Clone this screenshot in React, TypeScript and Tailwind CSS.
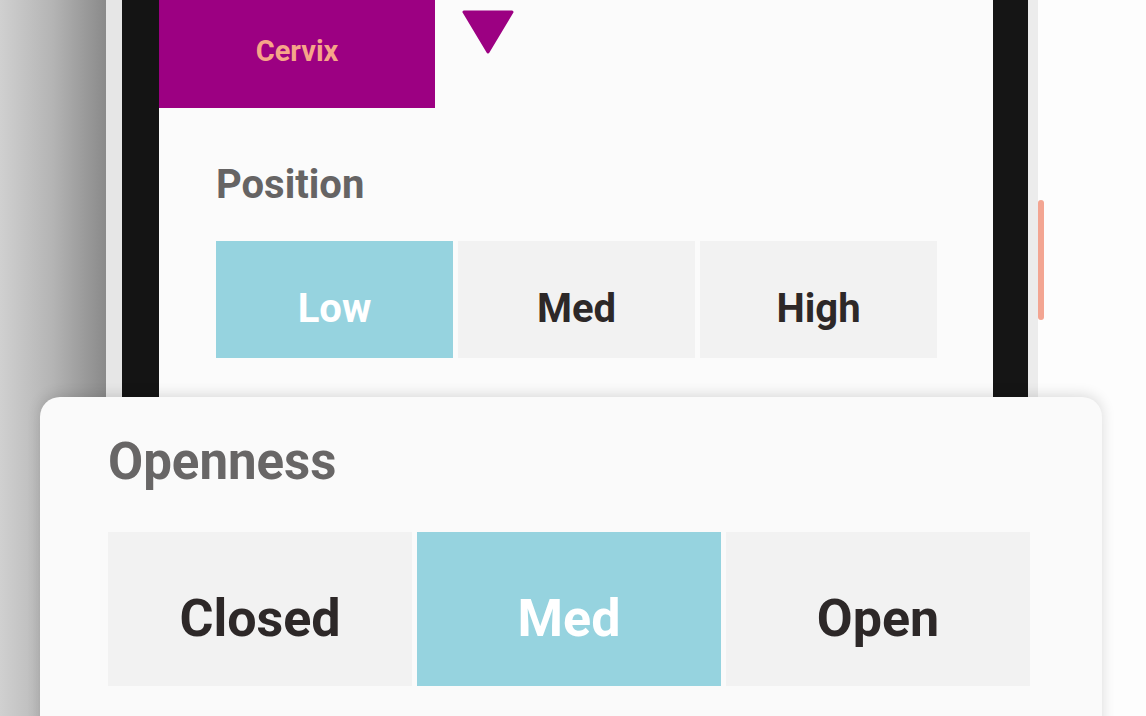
import React from "react";

const font = { fontFamily: "Roboto, 'Noto Sans', Arial, sans-serif" };

function Segmented({
  items,
  selected,
  className,
  textClass,
}: {
  items: string[];
  selected: number;
  className: string;
  textClass: string;
}) {
  return (
    <div className={`grid grid-cols-3 gap-[5px] ${className}`}>
      {items.map((label, i) => (
        <div
          key={label}
          className={`flex items-center justify-center font-bold leading-none ${textClass} ${
            i === selected ? "bg-[#96d3df] text-white" : "bg-[#f2f2f2] text-[#2d2828]"
          }`}
        >
          {label}
        </div>
      ))}
    </div>
  );
}

export default function App() {
  return (
    <div className="relative flex w-[1146px] h-[716px] overflow-hidden bg-[#fdfdfd]" style={font}>
      {/* background on the left */}
      <div className="w-[106px] h-full bg-gradient-to-r from-[#d0d0d0] via-[#b4b4b4] to-[#8a8a8a]" />

      {/* phone */}
      <div className="flex h-[397px]">
        <div className="w-[16px] bg-[#e6e6e6]" />
        <div className="w-[37px] bg-[#141414]" />
        <div className="w-[834px] bg-[#fbfbfb] flex flex-col">
          <div className="flex items-start">
            <div className="w-[276px] h-[108px] bg-[#9c0082] flex items-center justify-center">
              <span className="text-[29px] leading-none font-bold text-[#f6a589] -mt-[6px]">Cervix</span>
            </div>
            <svg width="52" height="44" viewBox="0 0 52 44" className="ml-[27px] mt-[10px]">
              <path d="M2 2 H50 L26 42 Z" fill="#9c0082" stroke="#9c0082" strokeWidth="3" strokeLinejoin="round" />
            </svg>
          </div>
          <div className="pl-[57px] pt-[57px]">
            <div className="text-[40px] leading-none font-bold text-[#666464]">Position</div>
            <Segmented
              items={["Low", "Med", "High"]}
              selected={0}
              className="mt-[36px] w-[721px] h-[117px]"
              textClass="text-[40px] pt-[18px]"
            />
          </div>
        </div>
        <div className="w-[35px] bg-[#151515]" />
        <div className="w-[10px] bg-[#ececec]" />
        <div className="w-[8px] pt-[200px]">
          <div className="h-[120px] w-[6px] rounded-full bg-[#f3a592]" />
        </div>
      </div>

      {/* bottom sheet */}
      <div className="absolute left-[40px] top-[397px] w-[1062px] h-[360px] rounded-[20px] bg-[#fafafa] shadow-[0_-2px_14px_rgba(0,0,0,0.14)] pl-[68px] pt-[39px]">
        <div className="text-[51px] leading-none font-bold text-[#686666]">Openness</div>
        <Segmented
          items={["Closed", "Med", "Open"]}
          selected={1}
          className="mt-[45px] w-[922px] h-[154px]"
          textClass="text-[52px] pt-[20px]"
        />
      </div>
    </div>
  );
}
